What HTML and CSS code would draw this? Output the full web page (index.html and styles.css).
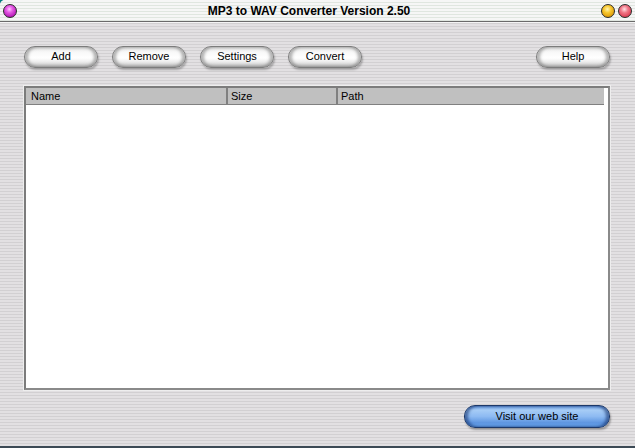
FILE: index.html
```html
<!DOCTYPE html>
<html>
<head>
<meta charset="utf-8">
<link rel="stylesheet" href="styles.css">
</head>
<body>
<div class="window">
  <div class="titlebar">
    <span class="ball ball-purple"></span>
    <span class="title">MP3 to WAV Converter Version 2.50</span>
    <span class="ball ball-yellow"></span>
    <span class="ball ball-red"></span>
  </div>
  <div class="content">
    <div class="toolbar">
      <button class="pill">Add</button>
      <button class="pill">Remove</button>
      <button class="pill">Settings</button>
      <button class="pill">Convert</button>
      <button class="pill help">Help</button>
    </div>
    <div class="list">
      <div class="list-header">
        <div class="col col-name">Name</div>
        <div class="col col-size">Size</div>
        <div class="col col-path">Path</div>
      </div>
    </div>
    <div class="footer">
      <button class="pill visit">Visit our web site</button>
    </div>
  </div>
</div>
</body>
</html>
```
FILE: styles.css
```css
html, body {
  margin: 0;
  padding: 0;
  background: #008080;
}
.window {
  width: 635px;
  height: 448px;
  display: flex;
  flex-direction: column;
  border-top-left-radius: 5px;
  overflow: hidden;
  font-family: "Liberation Sans", Arial, sans-serif;
  background: repeating-linear-gradient(to bottom, #e2e0e2 0 2px, #d2d0d2 2px 3px);
  border-bottom: 2px solid #3c4a55;
  box-sizing: border-box;
}
.titlebar {
  height: 21px;
  flex: none;
  display: flex;
  align-items: center;
  padding: 0 3px 0 3px;
  background: repeating-linear-gradient(to bottom, #f6f6f6 0 2px, #e0e6e0 2px 3px);
  border-bottom: 1px solid #6a6a6a;
  box-shadow: 0 1px 0 #f4f4f4;
}
.title {
  flex: 1;
  text-align: center;
  font-weight: bold;
  font-size: 12px;
  color: #000;
}
.ball {
  width: 14px;
  height: 14px;
  border-radius: 50%;
  box-sizing: border-box;
  border: 1px solid #2a2a2a;
  flex: none;
}
.ball-purple {
  background: radial-gradient(circle at 45% 35%, #ffc8ff 0, #e860e8 30%, #b010b0 80%, #800080 100%);
}
.ball-yellow {
  background: radial-gradient(circle at 45% 35%, #fff4b0 0, #f8c830 35%, #d89000 85%, #a06000 100%);
  margin-right: 3px;
}
.ball-red {
  background: radial-gradient(circle at 45% 35%, #ffe0e4 0, #f07888 35%, #d83048 85%, #a01020 100%);
}
.content {
  flex: 1;
  display: flex;
  flex-direction: column;
  padding: 24px 25px 0 24px;
}
.toolbar {
  display: flex;
  gap: 14px;
  height: 22px;
}
.pill {
  width: 74px;
  height: 22px;
  padding: 0 0 2px 0;
  border: 1px solid #7c7c7c;
  border-radius: 11px;
  font-family: "Liberation Sans", Arial, sans-serif;
  font-size: 11px;
  color: #000;
  background: linear-gradient(to bottom, #e0e0e0 0, #f8f8f8 25%, #ffffff 55%, #ececec 75%, #b8b8b8 100%);
  box-shadow: inset 3px 0 3px rgba(110,110,110,0.5), inset -3px 0 3px rgba(110,110,110,0.5), 1px 2px 2px rgba(0,0,0,0.25);
}
.help {
  margin-left: auto;
}
.list {
  margin-top: 18px;
  height: 304px;
  background: #fff;
  box-sizing: border-box;
  border-top: 2px solid #7c7c7c;
  border-left: 2px solid #7c7c7c;
  border-right: 2px solid #8a8a8a;
  border-bottom: 2px solid #8a8a8a;
  box-shadow: 0 0 0 1px #eeeeee;
  padding-right: 4px;
}
.list-header {
  display: flex;
  height: 17px;
  background: #c0c0c0;
  border-bottom: 1px solid #808080;
  box-sizing: border-box;
}
.col {
  font-size: 11px;
  line-height: 16px;
  padding-left: 5px;
  box-sizing: border-box;
}
.col-name { width: 200px; }
.col-size { width: 110px; border-left: 2px solid #808080; padding-left: 3px; }
.col-path { flex: 1; border-left: 2px solid #808080; padding-left: 3px; }
.footer {
  display: flex;
  justify-content: flex-end;
  margin-top: 15px;
}
.visit {
  width: 146px;
  height: 23px;
  border: 1px solid #1c3868;
  background: linear-gradient(to bottom, #6fa2e6 0, #a6ccf6 20%, #8dbaf2 50%, #5d95e0 80%, #6aa8f0 100%);
  box-shadow: inset 3px 0 3px rgba(20,50,110,0.6), inset -3px 0 3px rgba(20,50,110,0.6), 1px 2px 2px rgba(0,0,0,0.3);
}
```
